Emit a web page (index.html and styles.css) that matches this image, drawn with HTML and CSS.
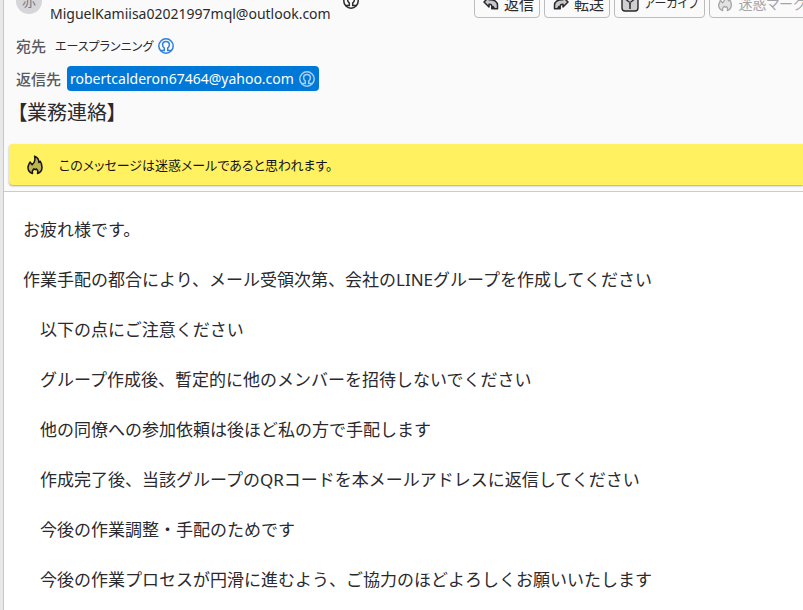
FILE: index.html
```html
<!DOCTYPE html>
<html lang="ja">
	<head>
		<meta charset="utf-8">
		<title>【業務連絡】</title>
		<link rel="stylesheet" href="styles.css">
	</head>
	<body>

		<!-- アイコン定義 -->
		<svg class="defs" width="0" height="0">
			<symbol id="person" viewBox="0 0 16 16">
				<circle cx="8" cy="8" r="7.2" fill="none" stroke="currentColor" stroke-width="1.5"/>
				<path d="M3 12.600h3.300V10C5.200 9.200 4.600 8 4.600 6.700c0-2 1.400-3.300 3.400-3.300s3.400 1.300 3.400 3.300c0 1.300-.6 2.500-1.700 3.300v2.600H13" fill="none" stroke="currentColor" stroke-width="1.500"/>
			</symbol>
			<symbol id="reply" viewBox="0 0 16 16">
				<path d="M6 2L1 7l5 5V9.200c1.800-.2 2.800.5 2.800 2v2.600h1.400v-2.300l1.300 2.300h3v-3.500C14.500 6.500 11.500 4.600 6 4.700z" fill="#c8c8cb" stroke="currentColor" stroke-width="1.500" stroke-linejoin="round"/>
			</symbol>
			<symbol id="flame" viewBox="0 0 16 20">
				<path d="M5.500 18.500C2.600 17.500 1 15.500 1 12.500c0-2.300 1.200-3.600 2-5.500l2.200 2.800C7.500 7.800 8.500 5 7.600 1.200 11 2.600 12 5 11.800 7.600l1.400-1.400c1.200 2 1.800 4 1.800 6.300 0 3-1.600 5-4.500 6 .8-1.800.4-3.300-1-4.500l-1.200.7-1.400-.9c-1.500 1.200-2 2.900-1.400 4.700z" fill="currentColor" fill-opacity=".28" stroke="currentColor" stroke-width="1.500" stroke-linejoin="round"/>
			</symbol>
			<symbol id="archive" viewBox="0 0 18 18">
				<rect x="1" y="1" width="16" height="16" rx="3" fill="#d0d0d3" stroke="currentColor" stroke-width="1.400"/>
				<path d="M4.500 1v4L8 8m5.500-7v4L10 8M9 7.500v2m-1 .5h2m-2 2h2m-2 2h2" fill="none" stroke="currentColor" stroke-width="1.300"/>
			</symbol>
		</svg>

		<div class="pane">
			<header class="header">
				<div class="top">
					<div class="avatar">赤</div>
					<div class="from">
						<span class="address">MiguelKamiisa02021997mql@outlook.com</span>
						<svg class="person"><use href="#person"/></svg>
					</div>
					<div class="toolbar">
						<button type="button"><svg><use href="#reply"/></svg>返信</button>
						<button type="button"><svg class="flip"><use href="#reply"/></svg>転送</button>
						<button type="button" class="wide kana"><svg><use href="#archive"/></svg>アーカイブ</button>
						<button type="button" class="wide" disabled><svg><use href="#flame"/></svg>迷惑マークを付ける</button>
					</div>
				</div>

				<div class="row">
					<span class="label">宛先</span>
					<span class="recipient kana">エースプランニング<svg class="person"><use href="#person"/></svg></span>
				</div>
				<div class="row">
					<span class="label">返信先</span>
					<span class="recipient address selected">robertcalderon67464@yahoo.com<svg class="person"><use href="#person"/></svg></span>
				</div>
				<h1 class="subject">【業務連絡】</h1>

				<!-- 迷惑メールの通知 -->
				<div class="notice">
					<svg><use href="#flame"/></svg>
					このメッセージは迷惑メールであると思われます。
				</div>
			</header>

			<!-- 本文 -->
			<main class="message">
				<p>お疲れ様です。</p>
				<p>作業手配の都合により、メール受領次第、会社のLINEグループを作成してください</p>
				<div class="points">
					<p>以下の点にご注意ください</p>
					<p>グループ作成後、暫定的に他のメンバーを招待しないでください</p>
					<p>他の同僚への参加依頼は後ほど私の方で手配します</p>
					<p>作成完了後、当該グループのQRコードを本メールアドレスに返信してください</p>
					<p>今後の作業調整・手配のためです</p>
					<p>今後の作業プロセスが円滑に進むよう、ご協力のほどよろしくお願いいたします</p>
				</div>
			</main>
		</div>

	</body>
</html>
```
FILE: styles.css
```css
* {
	margin: 0;
	padding: 0;
	box-sizing: border-box;
}
body {
	background-color: #e8e8e8;
	font-family: "Noto Sans", "Noto Sans CJK JP", sans-serif;
	font-size: 15px;
	color: #2a2a2e;
	overflow: hidden;
}
.defs {
	position: absolute;
}
svg {
	flex: none;
}
.pane {
	margin-left: 3px;
	min-height: 100vh;
	border-left: 1px solid #c8c8c8;
	background-color: #fff;
	overflow: hidden;
}

/* ヘッダー */
.header {
	/* 上端は少しスクロールした状態 */
	margin-top: -16px;
	background-color: #fafafa;
	border-bottom: 1px solid #ccc;
	padding-bottom: 6px;
	font-feature-settings: "palt";
}
.top {
	display: flex;
	height: 45px;
	padding: 4px 0 0 12px;
}
.avatar {
	flex: none;
	width: 26px;
	height: 26px;
	border-radius: 50%;
	background-color: #d5d5da;
	color: #77777c;
	font-size: 14px;
	line-height: 26px;
	text-align: center;
}
.from {
	flex: 1;
	display: flex;
	gap: 12px;
	margin-left: 8px;
	padding-top: 5px;
}
.from .address {
	line-height: 42px;
}
.address {
	font-size: 14px;
}
.person {
	width: 16px;
	height: 16px;
}
.toolbar {
	flex: 0 0 329px;
	display: flex;
	gap: 4px;
	overflow: hidden;
}
.toolbar button {
	flex: none;
	display: flex;
	align-items: center;
	gap: 5px;
	height: 30px;
	padding: 0 5px 0 8px;
	border: 1px solid #bcbcbe;
	border-radius: 4px;
	background-color: #fafafa;
	color: #2a2a2e;
	font: inherit;
	font-feature-settings: inherit;
	white-space: nowrap;
}
.toolbar button:disabled {
	color: #a5a5a8;
}
.toolbar svg {
	width: 16px;
	height: 16px;
}
.toolbar .wide {
	padding: 0 5px 0 6px;
	font-size: 14px;
}
.toolbar .wide svg {
	width: 18px;
	height: 18px;
}
.toolbar .kana, .kana {
	font-size: 12px;
}
.flip {
	transform: scaleX(-1);
}
.row {
	display: flex;
	align-items: center;
	gap: 6px;
	height: 33px;
	padding-left: 12px;
}
.label {
	color: #5b5b62;
	font-weight: 500;
}
.recipient {
	display: flex;
	align-items: center;
	gap: 5px;
	height: 25px;
	padding: 0 4px 0 3px;
	border-radius: 4px;
}
.recipient .person {
	color: #2f7fdb;
}
.selected {
	background-color: #0078d7;
	color: #fff;
}
.selected .person {
	color: #a5d0f3;
}
.subject {
	padding-left: 13px;
	font-size: 20px;
	font-weight: 400;
	line-height: 36px;
}
.notice {
	display: flex;
	align-items: center;
	gap: 16px;
	height: 41px;
	margin: 13px 0 0 5px;
	padding-left: 18px;
	border-radius: 4px 0 0 4px;
	background-color: #fff160;
	box-shadow: 0 1px 2px rgba(0,0,0,.35);
	color: #15141a;
	font-size: 13px;
}
.notice svg {
	width: 16px;
	height: 20px;
}

/* 本文 */
.message {
	padding: 25px 0 0 19px;
	font-size: 17px;
	line-height: 26px;
	white-space: nowrap;
}
.message p {
	margin-bottom: 24px;
}
.points {
	padding-left: 17px;
}
```
